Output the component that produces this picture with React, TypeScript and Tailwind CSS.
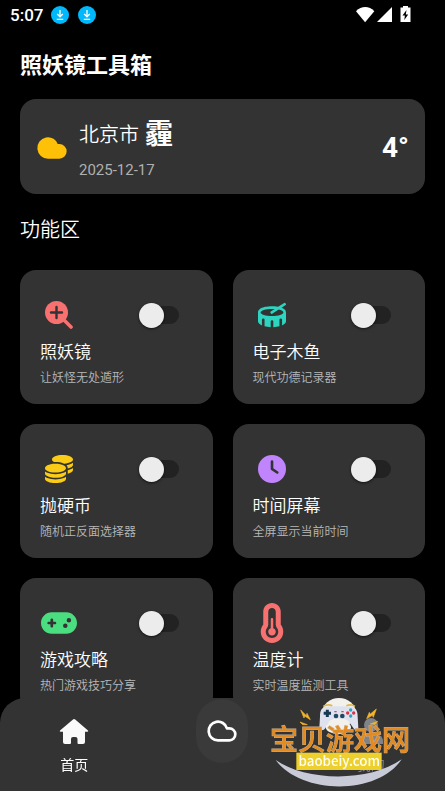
import React, { useState } from 'react';
import { Cloud } from 'lucide-react';
import { FaDrum } from 'react-icons/fa';
import { FaClock, FaCoins, FaGamepad, FaTemperatureHalf } from 'react-icons/fa6';

interface Tool {
  id: string;
  title: string;
  desc: string;
  icon: React.ReactNode;
}

const ZoomIcon = () => (
  <svg viewBox="0 0 28 28" className="size-7 text-[#f87171]" aria-hidden="true">
    <path d="M18 18L26 26" stroke="currentColor" strokeWidth="3.6" strokeLinecap="round" />
    <circle cx="11.5" cy="11.5" r="11.5" fill="currentColor" />
    <path d="M11.5 6v11M6 11.5h11" stroke="#333333" strokeWidth="2.4" strokeLinecap="round" />
  </svg>
);

const tools: Tool[] = [
  { id: 'mirror', title: '照妖镜', desc: '让妖怪无处遁形', icon: <ZoomIcon /> },
  { id: 'woodfish', title: '电子木鱼', desc: '现代功德记录器', icon: <FaDrum className="size-7 text-[#2dd4bf]" /> },
  { id: 'coin', title: '抛硬币', desc: '随机正反面选择器', icon: <FaCoins className="size-7 text-[#facc15]" /> },
  { id: 'clock', title: '时间屏幕', desc: '全屏显示当前时间', icon: <FaClock className="size-7 text-[#c084fc]" /> },
  { id: 'game', title: '游戏攻略', desc: '热门游戏技巧分享', icon: <FaGamepad className="size-9 text-[#4ade80]" /> },
  { id: 'temp', title: '温度计', desc: '实时温度监测工具', icon: <FaTemperatureHalf className="size-10 text-[#f87171]" /> },
];

const DownloadBadge = () => (
  <svg viewBox="0 0 18 18" className="size-[18px]" aria-hidden="true">
    <circle cx="9" cy="9" r="9" fill="#00b8fc" />
    <path d="M9 4v6.5M6.2 8L9 10.8 11.8 8M5.8 13.4h6.4" fill="none" stroke="#fff" strokeWidth="1.3" />
  </svg>
);

const StatusBar = () => (
  <div className="flex h-[30px] items-center pl-2.5 pr-[34px]">
    <span className="text-[17px] font-medium leading-6">5:07</span>
    <div className="ml-2 flex gap-[9px]">
      <DownloadBadge />
      <DownloadBadge />
    </div>
    <svg viewBox="0 0 56 18" className="ml-auto h-[18px] w-14" fill="#fff" aria-hidden="true">
      <path d="M1 5.200C6.5-.4 14-.4 19.300 5.200L10.100 16.200z" />
      <path d="M37 1v15H22z" />
      <path d="M48 0h5v1.500h2.500V16h-10V1.500H48z" />
      <path d="M51.500 4l-4 5.500h2.400l-.6 4.500 3.900-5.600h-2.400z" fill="#000" />
    </svg>
  </div>
);

const ToolCard: React.FC<{ tool: Tool; on: boolean; onToggle: () => void }> = ({ tool, on, onToggle }) => (
  <article className="rounded-2xl bg-[#333333] px-5 pb-[18px] pt-5">
    <div className="flex h-[50px] items-center justify-between pr-3.5">
      <div className="flex h-10 w-[38px] items-center justify-center">{tool.icon}</div>
      <label className="relative flex h-6 w-10 cursor-pointer items-center">
        <input type="checkbox" role="switch" aria-label={tool.title} checked={on} onChange={onToggle} className="peer sr-only" />
        <span className="ml-1 h-[18px] flex-1 rounded-full bg-[#222222] peer-checked:bg-[#2f6f52]" />
        <span className="absolute left-0 size-[25px] rounded-full bg-[#ececec] shadow-sm shadow-black/50 transition-transform peer-checked:translate-x-4" />
      </label>
    </div>
    <h3 className="text-[17px] font-[350] leading-6">{tool.title}</h3>
    <p className="mt-1.5 text-xs font-[350] leading-4 text-[#b8b8b8]">{tool.desc}</p>
  </article>
);

const SiteLogo = () => (
  <svg viewBox="30 18 450 285" className="pointer-events-none absolute bottom-0 right-[30px] h-[95px] w-[150px]" role="img" aria-label="宝贝游戏网">
    <ellipse cx="252" cy="68" rx="50" ry="44" fill="#f2f1ec" />
    <path d="M213 50c-14 2-18 12-18 30l-2 34c2 10 14 8 18 0l12-20c8-10 50-10 58 0l14 20c6 10 15 8 15 0l-2-34c0-18-6-28-18-30-14-2-62-2-77 0z" fill="#dfe2ee" />
    <ellipse cx="250" cy="112" rx="38" ry="20" fill="#f2f1ec" />
    <path d="M205 49q12-8 27-2M274 47q14-6 26 2" fill="none" stroke="#e0b84a" strokeWidth="5" />
    <path d="M217 59v22M206 70h22" stroke="#173a52" strokeWidth="9" />
    <circle cx="243" cy="78" r="7" fill="#1f4760" />
    <circle cx="262" cy="78" r="7" fill="#1f4760" />
    <path d="M238 65h7M259 65h7" stroke="#d9455b" strokeWidth="4" />
    <circle cx="287" cy="60" r="5" fill="#27a8bd" />
    <circle cx="278" cy="69" r="5" fill="#d8334a" />
    <circle cx="296" cy="69" r="5" fill="#d8334a" />
    <circle cx="287" cy="78" r="5" fill="#27a8bd" />
    <path d="M137 60l17 17 2-7 10 19-17-11-2 6zM364 57l-19 16-2-6-8 19 17-10 3 6zM135 96l22 8-14 0zM368 94l-22 8 14 1z" fill="#f3b52b" stroke="#f3b52b" strokeWidth="2" />
    <path d="M62 210c90 64 280 68 378-2-70 108-300 108-378 2z" fill="#c9cad8" />
    <text x="45" y="180" fontSize="84" fontWeight="500" fill="#e58a1f" stroke="#c9b08c" strokeWidth="3" paintOrder="stroke">宝贝游戏网</text>
    <rect x="124" y="188" width="256" height="52" fill="#edd02c" />
    <text x="253" y="227" textAnchor="middle" fontSize="40" fontWeight="500" fill="#fffef0" className="font-['Noto_Sans_CJK_SC',sans-serif]">baobeiy.com</text>
  </svg>
);

const BottomNav = () => (
  <nav className="fixed inset-x-0 bottom-0 grid grid-cols-3 items-start justify-items-center rounded-t-[25px] bg-[#333333] text-sm leading-5">
    <a href="#home" className="flex flex-col items-center pb-4 pt-[17px]">
      <svg viewBox="0 0 32 32" className="size-8" fill="#fafafa" aria-hidden="true">
        <path d="M15 4.500q1.100-1 2.200 0L30 15.500q.8 1-.5 1.200H27V27q0 2-2 2h-4.500q-1 0-1-1v-4q0-2-2-2h-2.500q-2 0-2 2v4q0 1-1 1H7q-2 0-2-2V16.700H2.500q-1.300-.2-.5-1.200z" />
      </svg>
      <span className="mt-2">首页</span>
    </a>
    <a href="#weather" aria-label="天气" className="mt-px flex h-16 w-[52px] items-center justify-center rounded-full bg-[#3a3a3a]">
      <Cloud className="size-8" strokeWidth={2} />
    </a>
    <a href="#mine" className="flex flex-col items-center pb-4 pt-[17px] text-[#81838b]">
      <svg viewBox="0 0 32 32" className="size-8" fill="currentColor" aria-hidden="true">
        <circle cx="16" cy="10" r="7" />
        <path d="M4 29v-3c0-5 5-8 12-8s12 3 12 8v3z" />
      </svg>
      <span className="mt-2">我的</span>
    </a>
    <SiteLogo />
  </nav>
);

export default function App() {
  const [enabled, setEnabled] = useState<Record<string, boolean>>({});

  const toggle = (id: string) => setEnabled(prev => ({ ...prev, [id]: !prev[id] }));

  return (
    <div className="h-dvh overflow-y-auto bg-black font-[Roboto,'Noto_Sans_CJK_SC',sans-serif] text-white [scrollbar-width:none]">
      <StatusBar />

      <main className="px-5 pb-28 pt-5">
        <h1 className="text-[22px] font-bold leading-8">照妖镜工具箱</h1>

        <section className="mt-[17px] flex items-center rounded-2xl bg-[#333333] px-4 pb-3.5 pt-4">
          <Cloud className="size-8 fill-[#ffc107] text-[#ffc107]" />
          <div className="ml-[11px]">
            <div className="flex items-center gap-1.5">
              <span className="text-xl font-[350] leading-10">北京市</span>
              <span className="text-[28px] font-bold leading-10">霾</span>
            </div>
            <p className="mt-[5px] text-[15px] leading-5 text-[#b0b0b0]">2025-12-17</p>
          </div>
          <span className="ml-auto text-[28px] font-bold leading-8">4°</span>
        </section>

        <h2 className="mt-5 text-xl font-[350] leading-8">功能区</h2>

        <section className="mt-6 grid grid-cols-2 gap-5">
          {tools.map(tool => (
            <ToolCard key={tool.id} tool={tool} on={!!enabled[tool.id]} onToggle={() => toggle(tool.id)} />
          ))}
        </section>
      </main>

      <BottomNav />
    </div>
  );
}
